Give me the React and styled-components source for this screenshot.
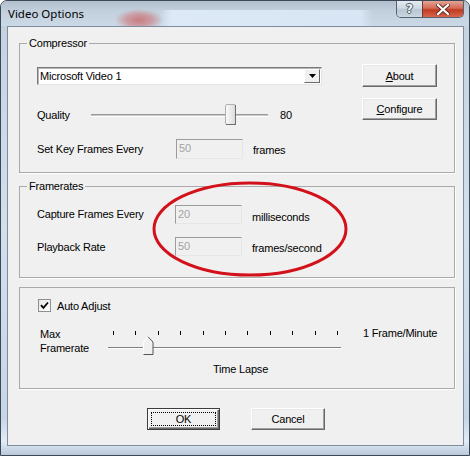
import React from "react";
import styled, { createGlobalStyle, css } from "styled-components";

const Global = createGlobalStyle`
  html, body { margin: 0; padding: 0; background: #ffffff; }
  body { font-family: "Liberation Sans", Arial, sans-serif; }
  * { box-sizing: border-box; }
`;

const Window = styled.div`
  width: 470px;
  height: 456px;
  border: 1px solid #3a4857;
  border-radius: 7px 7px 0 0;
  background: linear-gradient(180deg, #c3d1df 0%, #d3dfeb 50%, #c7d6e6 92%, #e2ecf6 97%, #b9c9da 100%);
  display: flex;
  flex-direction: column;
  overflow: hidden;
`;

const TitleBar = styled.div`
  height: 25px;
  display: flex;
  align-items: flex-start;
  padding-left: 7px;
  background:
    radial-gradient(ellipse 24px 11px at 138px 19px, rgba(200, 120, 125, 0.95) 0%, rgba(205, 135, 140, 0.7) 55%, rgba(205, 135, 140, 0) 100%),
    linear-gradient(90deg, rgba(222, 234, 247, 0) 158px, rgba(222, 234, 247, 0.95) 170px, rgba(216, 230, 245, 0.95) 360px, rgba(216, 230, 245, 0) 372px) 0 9px / 100% 16px no-repeat,
    linear-gradient(180deg, #b2c0ce 0%, #c2cfdc 40%, #cbd8e5 100%);
`;

const Title = styled.span`
  font-family: "Noto Sans", "Open Sans", sans-serif;
  font-size: 11.5px;
  line-height: 25px;
  color: #000;
`;

const CaptionButtons = styled.div`
  margin-left: auto;
  margin-right: 5px;
  display: flex;
  height: 17px;
  border: 1px solid #56626f;
  border-top: none;
  border-radius: 0 0 5px 5px;
  overflow: hidden;
`;

const CapBtn = styled.div`
  width: ${(p) => p.$w}px;
  height: 100%;
  display: flex;
  align-items: center;
  justify-content: center;
  ${(p) =>
    p.$close
      ? css`
          background: linear-gradient(180deg, #e2a596 0%, #d36a56 45%, #c03a22 55%, #d8654a 100%);
          border-left: 1px solid #6a3a33;
        `
      : css`
          background: linear-gradient(180deg, #e4ebf2 0%, #cfd9e3 45%, #b9c6d3 55%, #cad6e1 100%);
        `}
`;

const HelpGlyph = styled.span`
  font-family: "DejaVu Sans", sans-serif;
  font-weight: bold;
  font-size: 12px;
  line-height: 12px;
  color: #f2f4f6;
  text-shadow: 0 0 1px #3b4652, 1px 0 0 #5b6672, -1px 0 0 #5b6672, 0 1px 0 #5b6672, 0 -1px 0 #5b6672;
`;

const Client = styled.div`
  position: relative;
  flex: 1;
  margin: 0 5px 9px 6px;
  border: 1px solid #7d8d9e;
  background: #f0f0f0;
  padding: 9px 8px 0 11px;
  display: flex;
  flex-direction: column;
  font-size: 11px;
  letter-spacing: -0.2px;
  color: #000;
`;

const Group = styled.fieldset`
  margin: ${(p) => p.$mt || 0}px 0 0 0;
  padding: 0;
  min-width: 0;
  border: 1px solid #a9a9a9;
  box-shadow: 1px 1px 0 #ffffff;
`;

const Legend = styled.legend`
  margin-left: 7px;
  padding: 0 2px;
  font-size: 11px;
  line-height: 14px;
`;

const GroupBody = styled.div`
  padding: ${(p) => p.$pad};
`;

const CompressorLayout = styled.div`
  display: flex;
  justify-content: space-between;
  align-items: flex-start;
`;

const LeftCol = styled.div`
  width: 285px;
  display: flex;
  flex-direction: column;
`;

const RightCol = styled.div`
  width: 75px;
  display: flex;
  flex-direction: column;
  gap: 11px;
`;

const Combo = styled.div`
  margin-top: 3px;
  height: 18px;
  display: flex;
  align-items: stretch;
  background: #fff;
  border: 1px solid;
  border-color: #7a7a7a #e3e3e3 #e3e3e3 #7a7a7a;
  box-shadow: inset 1px 1px 0 #b5b5b5;
`;

const ComboText = styled.div`
  flex: 1;
  padding-left: 2px;
  line-height: 16px;
`;

const ComboArrow = styled.div`
  width: 16px;
  margin: 1px;
  background: #f0f0f0;
  border: 1px solid;
  border-color: #fff #696969 #696969 #fff;
  display: flex;
  align-items: center;
  justify-content: center;
`;

const QualityRow = styled.div`
  margin-top: 19px;
  height: 22px;
  display: grid;
  grid-template-columns: 42px 177px auto;
  column-gap: 12px;
  align-items: center;
`;

const Track = styled.div`
  position: relative;
  height: 22px;
  display: flex;
  align-items: center;
`;

const TrackLine = styled.div`
  width: 100%;
  height: 3px;
  border-top: 1px solid #9a9a9a;
  border-bottom: 1px solid #ffffff;
  background: #c8c8c8;
`;

const ThumbSvg = styled.svg`
  position: absolute;
  left: ${(p) => p.$left}px;
  top: ${(p) => p.$top}px;
`;

const FieldRow = styled.div`
  margin-top: ${(p) => p.$mt || 0}px;
  display: grid;
  grid-template-columns: ${(p) => p.$label}px 67px auto;
  column-gap: 10px;
  align-items: center;
`;

const Label = styled.span`
  line-height: 14px;
  white-space: nowrap;
  ${(p) => p.$nudge && css`padding-top: ${p.$nudge}px;`}
`;

const DisabledInput = styled.div`
  height: ${(p) => p.$h || 19}px;
  border: 1px solid;
  border-color: #9c9c9c #e6e6e6 #e6e6e6 #9c9c9c;
  background: #f0f0f0;
  color: #a3a3a3;
  padding-left: 2px;
  line-height: 16px;
`;

const WinButton = styled.button`
  width: ${(p) => p.$w}px;
  height: ${(p) => p.$h}px;
  padding: 0;
  font-family: "Liberation Sans", Arial, sans-serif;
  font-size: 11px;
  letter-spacing: -0.2px;
  color: #000;
  background: #f0f0f0;
  border: 1px solid;
  ${(p) =>
    p.$default
      ? css`
          border-color: #3c3c3c;
          box-shadow: inset 1px 1px 0 #ffffff, inset -1px -1px 0 #696969, inset -2px -2px 0 #a0a0a0;
        `
      : css`
          border-color: #ffffff #696969 #696969 #ffffff;
          box-shadow: inset -1px -1px 0 #a0a0a0, inset 1px 1px 0 #e8e8e8;
        `}
  display: flex;
  align-items: center;
  justify-content: center;
`;

const FocusRect = styled.span`
  flex: 1;
  align-self: stretch;
  margin: 3px;
  border: 1px dotted #000;
  display: flex;
  align-items: center;
  justify-content: center;
`;

const CheckRow = styled.div`
  display: flex;
  align-items: center;
  gap: 6px;
  padding-left: 18px;
  height: 13px;
`;

const CheckBox = styled.span`
  width: 13px;
  height: 13px;
  border: 1px solid #8e8f8f;
  background: linear-gradient(135deg, #e6e6e6 0%, #ffffff 100%);
  display: flex;
  align-items: center;
  justify-content: center;
`;

const SliderRow = styled.div`
  margin-top: 15px;
  padding-left: 20px;
  display: grid;
  grid-template-columns: 68px 233px auto;
  align-items: start;
`;

const TwoLine = styled.div`
  line-height: 14px;
`;

const TickSlider = styled.div`
  position: relative;
  height: 28px;
`;

const Ticks = styled.div`
  display: flex;
  justify-content: space-between;
  margin: 4px 3px 0 5px;
`;

const Tick = styled.span`
  width: 1px;
  height: 4px;
  background: #000;
`;

const TickTrack = styled.div`
  margin-top: 12px;
  height: 2px;
  border-top: 1px solid #808080;
  border-bottom: 1px solid #ffffff;
  background: #a0a0a0;
`;

const RightNote = styled.div`
  line-height: 14px;
  margin-top: -1px;
  padding-left: 22px;
  white-space: nowrap;
`;

const Caption = styled.div`
  margin-top: 7px;
  padding-left: 193px;
  line-height: 14px;
`;

const ButtonRow = styled.div`
  margin-top: 19px;
  display: flex;
  justify-content: center;
  gap: 31px;
  padding-right: 2px;
`;

const Ellipse = styled.svg`
  position: absolute;
  left: 142px;
  top: 153px;
  overflow: visible;
  pointer-events: none;
`;

const Ul = styled.u`
  text-decoration: underline;
  text-underline-offset: 1px;
`;

const ticks = Array.from({ length: 11 });

export default function App() {
  return (
    <>
      <Global />
      <Window>
        <TitleBar>
          <Title>Video Options</Title>
          <CaptionButtons>
            <CapBtn $w={25}>
              <HelpGlyph>?</HelpGlyph>
            </CapBtn>
            <CapBtn $w={41} $close>
              <svg width="14" height="11" viewBox="0 0 14 11">
                <path d="M2 1 L12 10 M12 1 L2 10" stroke="#5a2a22" strokeWidth="4" strokeLinecap="square" />
                <path d="M2 1 L12 10 M12 1 L2 10" stroke="#ffffff" strokeWidth="2.2" strokeLinecap="square" />
              </svg>
            </CapBtn>
          </CaptionButtons>
        </TitleBar>

        <Client>
          <Group>
            <Legend>Compressor</Legend>
            <GroupBody $pad="14px 17px 13px 17px">
              <CompressorLayout>
                <LeftCol>
                  <Combo>
                    <ComboText>Microsoft Video 1</ComboText>
                    <ComboArrow>
                      <svg width="7" height="4" viewBox="0 0 7 4">
                        <path d="M0 0 H7 L3.5 4 Z" fill="#000" />
                      </svg>
                    </ComboArrow>
                  </Combo>
                  <QualityRow>
                    <Label>Quality</Label>
                    <Track>
                      <TrackLine />
                      <ThumbSvg $left={134} $top={0} width="11" height="22" viewBox="0 0 11 22">
                        <defs>
                          <linearGradient id="qthumb" x1="0" y1="0" x2="1" y2="0">
                            <stop offset="0" stopColor="#fbfbfb" />
                            <stop offset="1" stopColor="#dadada" />
                          </linearGradient>
                        </defs>
                        <rect x="0.5" y="0.5" width="10" height="20" rx="1.5" fill="url(#qthumb)" stroke="#b0b0b0" />
                        <path d="M10.5 1 V21 M1 20.5 H10" stroke="#6e6e6e" />
                      </ThumbSvg>
                    </Track>
                    <Label>80</Label>
                  </QualityRow>
                  <FieldRow $mt={13} $label={129}>
                    <Label>Set Key Frames Every</Label>
                    <DisabledInput $h={20}>50</DisabledInput>
                    <Label $nudge={2}>frames</Label>
                  </FieldRow>
                </LeftCol>
                <RightCol>
                  <WinButton $w={75} $h={23}>
                    <span>
                      <Ul>A</Ul>bout
                    </span>
                  </WinButton>
                  <WinButton $w={75} $h={22}>
                    <span>
                      <Ul>C</Ul>onfigure
                    </span>
                  </WinButton>
                </RightCol>
              </CompressorLayout>
            </GroupBody>
          </Group>

          <Group $mt={6}>
            <Legend>Framerates</Legend>
            <GroupBody $pad="11px 17px 21px 17px">
              <FieldRow $label={128}>
                <Label>Capture Frames Every</Label>
                <DisabledInput>20</DisabledInput>
                <Label $nudge={6}>milliseconds</Label>
              </FieldRow>
              <FieldRow $mt={13} $label={128}>
                <Label>Playback Rate</Label>
                <DisabledInput>50</DisabledInput>
                <Label $nudge={2}>frames/second</Label>
              </FieldRow>
            </GroupBody>
          </Group>

          <Group $mt={9}>
            <GroupBody $pad="11px 0 12px 0">
              <CheckRow>
                <CheckBox>
                  <svg width="9" height="9" viewBox="0 0 9 9">
                    <path d="M1 4.2 L3.4 6.8 L8 1.5" stroke="#000" strokeWidth="1.8" fill="none" />
                  </svg>
                </CheckBox>
                <span>Auto Adjust</span>
              </CheckRow>
              <SliderRow>
                <TwoLine>
                  Max
                  <br />
                  Framerate
                </TwoLine>
                <TickSlider>
                  <Ticks>
                    {ticks.map((_, i) => (
                      <Tick key={i} />
                    ))}
                  </Ticks>
                  <TickTrack />
                  <ThumbSvg $left={35} $top={9} width="11" height="19" viewBox="0 0 11 19">
                    <path d="M0.5 18.5 V6 L5 0.8 L10 6 V18.5 Z" fill="#f0f0f0" />
                    <path d="M0.5 18 V6 L5 0.8" stroke="#ffffff" fill="none" />
                    <path d="M5 0.8 L10 6 V18.5 H0.5" stroke="#555555" fill="none" />
                  </ThumbSvg>
                </TickSlider>
                <RightNote>1 Frame/Minute</RightNote>
              </SliderRow>
              <Caption>Time Lapse</Caption>
            </GroupBody>
          </Group>

          <ButtonRow>
            <WinButton $w={73} $h={22} $default>
              <FocusRect>OK</FocusRect>
            </WinButton>
            <WinButton $w={74} $h={22}>
              Cancel
            </WinButton>
          </ButtonRow>

          <Ellipse width="200" height="100" viewBox="0 0 200 100">
            <ellipse cx="100" cy="49" rx="96" ry="46" fill="none" stroke="#d3111b" strokeWidth="3" />
          </Ellipse>
        </Client>
      </Window>
    </>
  );
}
